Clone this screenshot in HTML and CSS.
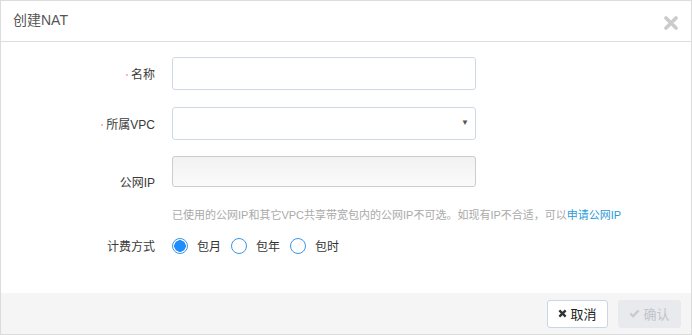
FILE: index.html
```html
<!DOCTYPE html>
<html lang="zh">
<head>
<meta charset="utf-8">
<title>创建NAT</title>
<link rel="stylesheet" href="styles.css">
</head>
<body>
<div class="dialog">
  <div class="header">
    <span class="title">创建NAT</span>
    <svg class="close" width="14" height="14" viewBox="0 0 14 14"><path d="M2 2 L12 12 M12 2 L2 12" stroke="#cbcbcb" stroke-width="3.6" stroke-linecap="round"/></svg>
  </div>
  <div class="body">
    <div class="row r1">
      <label class="label"><i class="req"></i>名称</label>
      <div class="field"><input class="input" type="text"></div>
    </div>
    <div class="row r2">
      <label class="label"><i class="req"></i>所属VPC</label>
      <div class="field"><div class="select"><span class="arrow">&#9660;</span></div></div>
    </div>
    <div class="row r3">
      <label class="label lower">公网IP</label>
      <div class="field"><div class="input disabled"></div></div>
    </div>
    <div class="help">已使用的公网IP和其它VPC共享带宽包内的公网IP不可选。如现有IP不合适，可以<a class="link">申请公网IP</a></div>
    <div class="row r4">
      <label class="label">计费方式</label>
      <div class="radios">
        <span class="radio checked"></span><span class="rtext">包月</span>
        <span class="radio"></span><span class="rtext">包年</span>
        <span class="radio"></span><span class="rtext">包时</span>
      </div>
    </div>
  </div>
  <div class="footer">
    <button class="btn cancel"><svg class="ico" width="9" height="9" viewBox="0 0 10 10"><path d="M1.5 1.5 L8.5 8.5 M8.5 1.5 L1.5 8.5" stroke="#333" stroke-width="2.6"/></svg>取消</button>
    <button class="btn ok"><svg class="ico" width="11" height="9" viewBox="0 0 12 10"><path d="M1.5 5 L4.5 8 L10.5 1.5" fill="none" stroke="#c8cbd0" stroke-width="2.6"/></svg>确认</button>
  </div>
</div>
</body>
</html>
```
FILE: styles.css
```css
html, body { margin: 0; padding: 0; background: #fff; }
body { font-family: "Liberation Sans", "Noto Sans CJK SC", sans-serif; color: #333; }
.dialog {
  width: 692px; height: 335px; box-sizing: border-box;
  border: 1px solid #dcdcdc;
  display: flex; flex-direction: column;
}
.header {
  height: 40px; border-bottom: 1px solid #dedede;
  display: flex; align-items: center; justify-content: space-between;
  padding: 0 13px 0 12px;
}
.title { font-size: 14px; color: #555; margin-top: -4px; }
.close { display: block; margin-top: 3px; }
.body { flex: 1; padding-top: 15px; }
.row { display: flex; align-items: center; }
.label {
  width: 154px; text-align: right; margin-right: 17px;
  font-size: 12px; color: #3a3a3a;
  display: flex; justify-content: flex-end; align-items: center;
}
.req { display: inline-block; width: 2px; height: 2px; background: #f5a3a3; border-radius: 1px; margin-right: 3px; margin-top: 2px; }
.field { width: 304px; }
.input, .select {
  display: block; box-sizing: border-box; width: 304px; height: 33px;
  border: 1px solid #cfd9e6; border-radius: 3px; background: #fff;
  margin: 0; padding: 0;
}
.select { position: relative; }
.arrow { position: absolute; right: 6px; top: 10px; font-size: 8px; color: #555; }
.input.disabled {
  height: 31px; border-color: #cccccc;
  background: linear-gradient(#f2f2f2, #fafafa);
}
.r2 { margin-top: 17px; }
.r3 { margin-top: 16px; align-items: flex-start; }
.lower { margin-top: 17px; }
.help {
  margin: 18px 0 0 171px; font-size: 11px; color: #aaa; line-height: 14px;
}
.link { color: #2a9bd8; }
.r4 { margin-top: 15px; }
.radios { display: flex; align-items: center; font-size: 12px; }
.radio {
  width: 16px; height: 16px; box-sizing: border-box; border-radius: 50%;
  border: 1px solid #3d95e8; background: #fff; display: inline-block;
}
.radio.checked { border-color: #3d95e8; background: radial-gradient(circle, #1e8dff 0 5.5px, #fff 6px); }
.rtext { margin: 0 10px 0 9px; color: #333; font-size: 12px; }
.footer {
  height: 41px; background: #f5f5f5;
  display: flex; justify-content: flex-end; align-items: center;
  padding-right: 10px; gap: 10px;
}
.btn {
  height: 28px; border-radius: 3px; font-family: inherit; font-size: 13px;
  display: flex; align-items: center; justify-content: center; padding: 0;
}
.cancel { width: 61px; background: #fff; border: 1px solid #c9d6e6; color: #222; }
.ok { width: 63px; background: #e8eaed; border: 1px solid #e8eaed; color: #c0c4c9; }
.ico { display: block; margin-right: 3px; }
```
